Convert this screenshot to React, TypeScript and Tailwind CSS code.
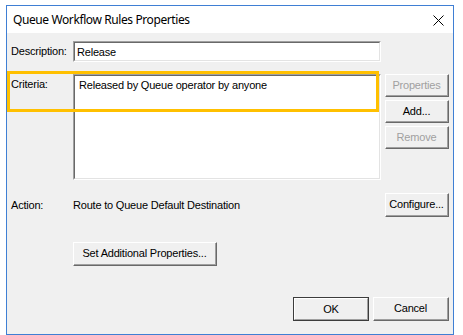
import React from "react";

const body = { fontFamily: '"Liberation Sans", Arial, sans-serif' };

function Btn({
  children,
  disabled,
  def,
  className = "",
}: {
  children: React.ReactNode;
  disabled?: boolean;
  def?: boolean;
  className?: string;
}) {
  return (
    <div
      className={`flex items-center justify-center bg-[#f0f0f0] text-[11px] ${
        def ? "border border-[#3c3c3c]" : "border-t border-l border-t-white border-l-white border-b border-r border-b-[#696969] border-r-[#696969]"
      } ${className}`}
    >
      <div
        className={`flex h-full w-full items-center justify-center ${
          def
            ? "border-t border-l border-t-white border-l-white border-b border-r border-b-[#a0a0a0] border-r-[#a0a0a0]"
            : "border-b border-r border-b-[#a0a0a0] border-r-[#a0a0a0]"
        } ${disabled ? "text-[#a0a0a0]" : "text-black"}`}
      >
        {children}
      </div>
    </div>
  );
}

function Sunken({ children, className = "" }: { children?: React.ReactNode; className?: string }) {
  return (
    <div className={`border-t border-l border-t-[#a0a0a0] border-l-[#a0a0a0] border-b border-r border-b-white border-r-white ${className}`}>
      <div className="h-full w-full border-t border-l border-t-[#696969] border-l-[#696969] border-b border-r border-b-[#e3e3e3] border-r-[#e3e3e3] bg-white">
        {children}
      </div>
    </div>
  );
}

export default function App() {
  return (
    <div className="h-[335px] w-[463px] bg-white pl-[6px] pt-[5px]" style={body}>
      <div className="flex h-[330px] w-[448px] flex-col border border-[#3f7fd4] bg-[#f0f0f0]">
        {/* title bar */}
        <div className="flex h-[27px] items-center justify-between bg-white pl-[6px] pr-[9px]">
          <span
            className="text-[12px] tracking-[-0.4px] text-black"
            style={{ fontFamily: '"Noto Sans", "Open Sans", sans-serif' }}
          >
            Queue Workflow Rules Properties
          </span>
          <svg width="11" height="11" viewBox="0 0 11 11" className="mt-[1px]">
            <path d="M0.5 0.5 L10.5 10.5 M10.5 0.5 L0.5 10.5" stroke="#000" strokeWidth="1" fill="none" />
          </svg>
        </div>

        {/* body */}
        <div className="relative flex flex-1 flex-col pl-[4px] pr-[4px] pt-[8px] text-[11px] tracking-[-0.2px] text-black">
          {/* description */}
          <div className="flex h-[21px] items-center">
            <div className="w-[62px]">Description:</div>
            <Sunken className="h-[21px] w-[308px]">
              <div className="pl-[2px] pt-[2px] leading-[14px]">Release</div>
            </Sunken>
          </div>

          {/* criteria */}
          <div className="mt-[12px] flex">
            <div className="w-[62px] pt-[2px]">Criteria:</div>
            <Sunken className="h-[106px] w-[308px]">
              <div className="pl-[4px] pt-[2px] leading-[14px]">Released by Queue operator by anyone</div>
            </Sunken>
            <div className="ml-[4px] flex w-[64px] flex-col gap-[3px]">
              <Btn disabled className="h-[23px]">Properties</Btn>
              <Btn className="h-[23px]">Add...</Btn>
              <Btn disabled className="h-[23px]">Remove</Btn>
            </div>
          </div>

          {/* orange highlight */}
          <div className="absolute left-[0px] top-[38px] h-[41px] w-[372px] border-[3px] border-[#ffc000]" />

          {/* action */}
          <div className="mt-[13px] flex h-[24px] items-center">
            <div className="w-[62px]">Action:</div>
            <div className="w-[312px]">Route to Queue Default Destination</div>
            <Btn className="h-[24px] w-[64px]">Configure...</Btn>
          </div>

          {/* set additional */}
          <div className="mt-[25px] flex">
            <div className="w-[62px]" />
            <Btn className="h-[24px] w-[144px]">Set Additional Properties...</Btn>
          </div>

          {/* ok cancel */}
          <div className="mt-[31px] flex justify-end gap-[4px]">
            <Btn def className="h-[24px] w-[76px]">OK</Btn>
            <Btn className="h-[24px] w-[76px]">Cancel</Btn>
          </div>
        </div>
      </div>
    </div>
  );
}
